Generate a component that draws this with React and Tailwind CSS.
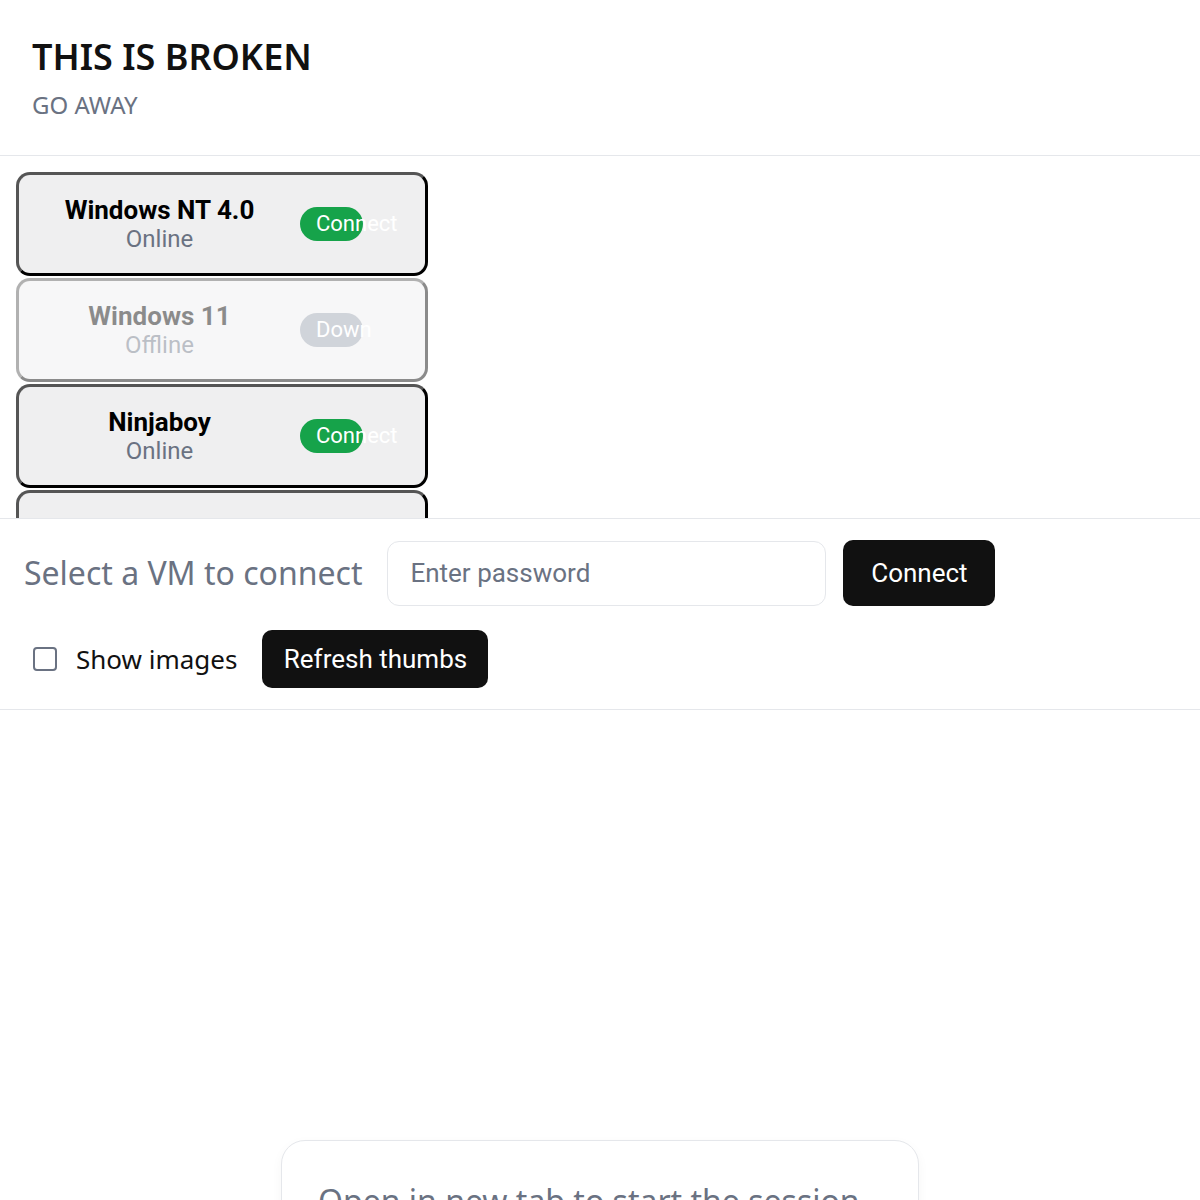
import React from "react";

const vms = [
  { name: "Windows NT 4.0", status: "Online", up: true },
  { name: "Windows 11", status: "Offline", up: false },
  { name: "Ninjaboy", status: "Online", up: true },
  { name: "Arch Linux", status: "Online", up: true },
];

function VmCard({ vm }) {
  return (
    <div
      className={
        "mb-[2px] flex h-[104px] w-[412px] shrink-0 items-center rounded-[14px] border-[3px] border-t-[#555] border-l-[#555] border-b-black border-r-black bg-[#efeff0] " +
        (vm.up ? "" : "opacity-45")
      }
    >
      <div className="flex w-[281px] flex-col items-center font-['Roboto',sans-serif]">
        <div className="text-[26px] leading-[30px] font-bold text-black">{vm.name}</div>
        <div className="text-[24px] leading-[28px] text-gray-500">{vm.status}</div>
      </div>
      <div
        className={
          "h-[34px] w-[63px] overflow-visible whitespace-nowrap rounded-full pl-4 font-['Roboto',sans-serif] text-[22px] leading-[34px] text-white " +
          (vm.up ? "bg-[#16a34a]" : "bg-gray-400")
        }
      >
        {vm.up ? "Connect" : "Down"}
      </div>
    </div>
  );
}

export default function App() {
  const [showImages, setShowImages] = React.useState(false);
  const [password, setPassword] = React.useState("");

  return (
    <div className="min-h-[1200px] bg-white font-['Noto_Sans',sans-serif]">
      <header className="h-[156px] border-b border-gray-200 px-8 pt-[33px]">
        <h1 className="text-[36px] leading-[48px] font-semibold text-[#111]">THIS IS BROKEN</h1>
        <p className="mt-[8px] text-[24px] leading-[32px] text-gray-500">GO AWAY</p>
      </header>

      <div className="flex h-[363px] flex-col overflow-hidden border-b border-gray-200 pl-4 pt-4">
        {vms.map((vm) => (
          <VmCard key={vm.name} vm={vm} />
        ))}
      </div>

      <div className="border-b border-gray-200 px-6 py-[21px]">
        <div className="flex items-center">
          <span className="mr-[25px] text-[32px] leading-[42px] text-gray-500">Select a VM to connect</span>
          <input
            type="password"
            value={password}
            onChange={(e) => setPassword(e.target.value)}
            placeholder="Enter password"
            className="h-[65px] w-[439px] rounded-[12px] border border-gray-200 px-[22px] font-['Roboto',sans-serif] text-[26px] text-gray-700 placeholder:text-gray-500 outline-none"
          />
          <button className="ml-[17px] h-[66px] w-[152px] rounded-[10px] bg-[#111] font-['Roboto',sans-serif] text-[26px] text-white">
            Connect
          </button>
        </div>
        <div className="mt-[24px] flex items-center pl-[9px]">
          <label className="flex items-center">
            <input
              type="checkbox"
              checked={showImages}
              onChange={(e) => setShowImages(e.target.checked)}
              className="h-6 w-6 appearance-none rounded-[4px] border-2 border-gray-500 bg-white"
            />
            <span className="ml-[19px] text-[26px] leading-[34px] text-[#111]">Show images</span>
          </label>
          <button className="ml-[25px] h-[58px] w-[226px] rounded-[10px] bg-[#111] font-['Roboto',sans-serif] text-[26px] text-white">
            Refresh thumbs
          </button>
        </div>
      </div>

      <div className="flex justify-center pt-[430px]">
        <div className="h-[200px] w-[638px] rounded-[24px] border border-gray-200 bg-white px-9 pt-[40px] shadow-[0_4px_12px_rgba(0,0,0,0.04)]">
          <p className="text-[32px] leading-[40px] text-gray-500">Open in new tab to start the session</p>
        </div>
      </div>
    </div>
  );
}
